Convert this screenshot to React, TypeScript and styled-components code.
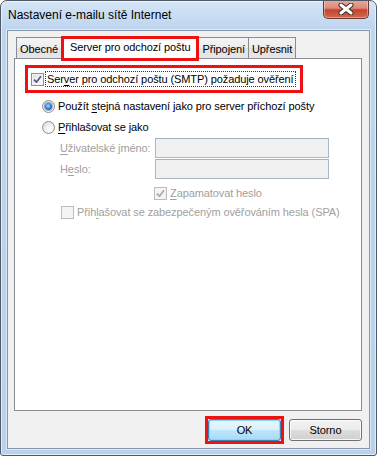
import React from "react";
import styled, { createGlobalStyle } from "styled-components";

const GlobalStyle = createGlobalStyle`
  html, body {
    margin: 0;
    padding: 0;
    background: #fff;
  }
  body {
    font-family: "Liberation Sans", Arial, sans-serif;
    font-size: 11px;
    letter-spacing: -0.1px;
    color: #000;
  }
  u {
    text-decoration-thickness: 1px;
    text-underline-offset: 2px;
  }
`;

const Window = styled.div`
  box-sizing: border-box;
  width: 377px;
  height: 456px;
  display: flex;
  flex-direction: column;
  border: 1px solid #4f5966;
  border-radius: 7px 7px 3px 3px;
  background: linear-gradient(to bottom, #d4e4f5 0, #bed5ee 29px, #b9d1ea 100%);
  box-shadow: inset 0 0 0 1px rgba(255, 255, 255, 0.6);
  overflow: hidden;
`;

const TitleBar = styled.div`
  display: flex;
  align-items: flex-start;
  height: 29px;
  flex-shrink: 0;
`;

const Title = styled.div`
  height: 29px;
  line-height: 29px;
  padding-left: 7px;
  font-size: 12px;
  letter-spacing: 0;
  color: #000;
`;

const CloseButton = styled.div`
  margin: -1px 7px 0 auto;
  width: 46px;
  height: 19px;
  box-sizing: border-box;
  border: 1px solid #6b3a33;
  border-top: none;
  border-radius: 0 0 5px 5px;
  background: linear-gradient(
    to bottom,
    #e9a99b 0,
    #dd8a78 45%,
    #c4442d 55%,
    #cf6a52 100%
  );
  box-shadow: inset 0 0 0 1px rgba(255, 255, 255, 0.35);
  display: flex;
  align-items: center;
  justify-content: center;
`;

const ClientArea = styled.div`
  flex: 1;
  margin: 0 6px 6px 6px;
  border: 1px solid #8797ab;
  background: #f0f0f0;
  display: flex;
  flex-direction: column;
  padding: 4px 7px 0 6px;
  box-shadow: 0 0 0 1px rgba(255, 255, 255, 0.5);
`;

const TabStrip = styled.div`
  display: flex;
  align-items: flex-end;
  height: 23px;
  padding-left: 2px;
  position: relative;
  z-index: 1;
`;

const Tab = styled.div<{ $active?: boolean }>`
  box-sizing: border-box;
  border: 1px solid #898c95;
  border-bottom: none;
  white-space: nowrap;
  margin-left: -1px;
  &:first-child {
    margin-left: 0;
  }
  ${(p) =>
    p.$active
      ? `
    height: 25px;
    margin-bottom: -3px;
    padding: 0 8px;
    background: #fff;
    line-height: 20px;
    position: relative;
    z-index: 2;
    outline: 3px solid #ee1111;
    outline-offset: -3px;
  `
      : `
    height: 21px;
    line-height: 22px;
    padding: 0 3px;
    background: linear-gradient(to bottom, #f4f4f4 0, #ececec 50%, #e2e2e2 51%, #e6e6e6 100%);
  `}
`;

const Panel = styled.div`
  box-sizing: border-box;
  height: 353px;
  background: #fff;
  border: 1px solid #898c95;
  display: flex;
  flex-direction: column;
  align-items: flex-start;
`;

const FocusBox = styled.div`
  display: flex;
  align-items: center;
  margin: 6px 0 0 10px;
  height: 22px;
  padding: 0 4px 0 3px;
  border: 3px solid #ee1111;
`;

const FocusText = styled.span`
  border: 1px dotted #333;
  padding: 0 1px;
  line-height: 14px;
  margin-left: 1px;
`;

const OptionRow = styled.div<{ $top: number; $left: number }>`
  display: flex;
  align-items: center;
  height: 16px;
  margin-top: ${(p) => p.$top}px;
  margin-left: ${(p) => p.$left}px;
  gap: 3px;
  white-space: nowrap;
`;

const BoxFrame = styled.span<{ $disabled?: boolean }>`
  box-sizing: border-box;
  width: 13px;
  height: 13px;
  flex-shrink: 0;
  border: 1px solid ${(p) => (p.$disabled ? "#bcbcbc" : "#8e8f8f")};
  background: ${(p) =>
    p.$disabled
      ? "#f4f4f4"
      : "linear-gradient(135deg, #dcdcdc 0, #f4f4f4 60%, #ffffff 100%)"};
  box-shadow: inset 0 0 0 1px ${(p) => (p.$disabled ? "#f4f4f4" : "#f2f2f2")};
  display: flex;
  align-items: center;
  justify-content: center;
`;

const RadioFrame = styled.span`
  box-sizing: border-box;
  width: 13px;
  height: 13px;
  flex-shrink: 0;
  border-radius: 50%;
  border: 1px solid #8e8f8f;
  background: radial-gradient(circle at 65% 70%, #ffffff 0, #f0f0f0 45%, #d2d2d2 100%);
  display: flex;
  align-items: center;
  justify-content: center;
`;

const RadioDot = styled.span`
  width: 7px;
  height: 7px;
  border-radius: 50%;
  background: radial-gradient(circle at 45% 40%, #b9dcff 0, #3b87d8 45%, #0c3f8a 100%);
  box-shadow: 0 0 0 1px rgba(30, 70, 130, 0.45);
`;

const LoginGrid = styled.div`
  display: grid;
  grid-template-columns: 95px 174px;
  grid-auto-rows: 20px;
  row-gap: 1px;
  margin: 3px 0 0 45px;
`;

const FieldLabel = styled.label`
  color: #a0a0a0;
  display: flex;
  align-items: center;
  white-space: nowrap;
`;

const FieldInput = styled.div`
  box-sizing: border-box;
  border: 1px solid #abb7c7;
  border-top-color: #a4b0bf;
  background: #f0f0f0;
`;

const GrayText = styled.span`
  color: #a0a0a0;
`;

const ButtonRow = styled.div`
  display: flex;
  justify-content: flex-end;
  align-items: center;
  height: 22px;
  margin-top: 8px;
`;

const DefaultMark = styled.div`
  border: 3px solid #ee1111;
  margin: -3px 5px -3px 0;
  display: flex;
`;

const Button = styled.div<{ $default?: boolean }>`
  box-sizing: border-box;
  width: 73px;
  height: 22px;
  border-radius: 3px;
  display: flex;
  align-items: center;
  justify-content: center;
  border: 1px solid ${(p) => (p.$default ? "#3c7fb1" : "#707070")};
  background: ${(p) =>
    p.$default
      ? "linear-gradient(to bottom, #eaf6fd 0, #d9f0fc 50%, #bee6fd 51%, #a7d9f5 100%)"
      : "linear-gradient(to bottom, #f2f2f2 0, #ebebeb 50%, #dddddd 51%, #cfcfcf 100%)"};
  box-shadow: inset 0 0 0 1px
    ${(p) => (p.$default ? "rgba(120, 220, 250, 0.9)" : "rgba(255, 255, 255, 0.8)")};
`;

const CheckMark = ({ color }: { color: string }) => (
  <svg width="9" height="9" viewBox="0 0 9 9">
    <path
      d="M1 4.6 L3.4 7.2 L8 1.2"
      fill="none"
      stroke={color}
      strokeWidth="1.7"
      strokeLinejoin="round"
    />
  </svg>
);

const Checkbox = ({ checked, disabled }: { checked?: boolean; disabled?: boolean }) => (
  <BoxFrame $disabled={disabled}>
    {checked && <CheckMark color={disabled ? "#a9a9a9" : "#4a5c86"} />}
  </BoxFrame>
);

const Radio = ({ checked }: { checked?: boolean }) => (
  <RadioFrame>{checked && <RadioDot />}</RadioFrame>
);

const CloseGlyph = () => (
  <svg width="16" height="12" viewBox="0 0 16 12">
    <path d="M3 2 L13 10 M13 2 L3 10" stroke="#3a2a28" strokeWidth="5" strokeLinecap="round" />
    <path d="M3 2 L13 10 M13 2 L3 10" stroke="#ffffff" strokeWidth="3" strokeLinecap="round" />
  </svg>
);

export default function App() {
  return (
    <>
      <GlobalStyle />
      <Window>
        <TitleBar>
          <Title>Nastavení e-mailu sítě Internet</Title>
          <CloseButton>
            <CloseGlyph />
          </CloseButton>
        </TitleBar>
        <ClientArea>
          <TabStrip>
            <Tab>Obecné</Tab>
            <Tab $active>Server pro odchozí poštu</Tab>
            <Tab>Připojení</Tab>
            <Tab>Upřesnit</Tab>
          </TabStrip>
          <Panel>
            <FocusBox>
              <Checkbox checked />
              <FocusText>
                Ser<u>v</u>er pro odchozí poštu (SMTP) požaduje ověření
              </FocusText>
            </FocusBox>
            <OptionRow $top={5} $left={27}>
              <Radio checked />
              <span>
                Použít <u>s</u>tejná nastavení jako pro server příchozí pošty
              </span>
            </OptionRow>
            <OptionRow $top={5} $left={27}>
              <Radio />
              <span>
                <u>P</u>řihlašovat se jako
              </span>
            </OptionRow>
            <LoginGrid>
              <FieldLabel>
                <span>
                  <u>U</u>živatelské jméno:
                </span>
              </FieldLabel>
              <FieldInput />
              <FieldLabel>
                <span>
                  H<u>e</u>slo:
                </span>
              </FieldLabel>
              <FieldInput />
            </LoginGrid>
            <OptionRow $top={6} $left={139}>
              <Checkbox checked disabled />
              <GrayText>
                <u>Z</u>apamatovat heslo
              </GrayText>
            </OptionRow>
            <OptionRow $top={3} $left={46}>
              <Checkbox disabled />
              <GrayText>
                Přih<u>l</u>ašovat se zabezpečeným ověřováním hesla (SPA)
              </GrayText>
            </OptionRow>
          </Panel>
          <ButtonRow>
            <DefaultMark>
              <Button $default>OK</Button>
            </DefaultMark>
            <Button>Storno</Button>
          </ButtonRow>
        </ClientArea>
      </Window>
    </>
  );
}
